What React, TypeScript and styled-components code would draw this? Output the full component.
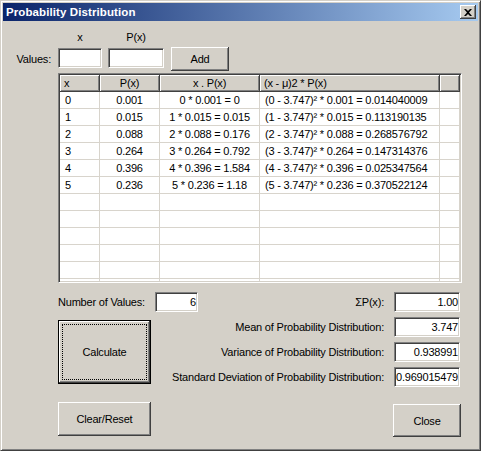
import React from "react";
import styled, { createGlobalStyle } from "styled-components";

const FACE = "#D4D0C8";

const Global = createGlobalStyle`
  html, body { margin: 0; padding: 0; background: ${FACE}; }
  body {
    font-family: "Liberation Sans", Arial, sans-serif;
    font-size: 11px;
    letter-spacing: -0.2px;
    color: #000;
  }
  #root { width: 481px; height: 451px; }
`;

const Window = styled.div`
  box-sizing: border-box;
  width: 481px;
  height: 451px;
  background: ${FACE};
  border: 1px solid;
  border-color: ${FACE} #404040 #404040 ${FACE};
  box-shadow: inset 1px 1px #fff, inset -1px -1px #808080;
  padding: 2px;
  display: flex;
  flex-direction: column;
`;

const TitleBar = styled.div`
  height: 18px;
  flex: none;
  background: linear-gradient(to right, #0a246a, #a6caf0);
  display: flex;
  align-items: center;
  justify-content: space-between;
  padding: 0 2px 0 3px;
`;

const Title = styled.span`
  color: #fff;
  font-weight: bold;
  font-size: 11.5px;
  letter-spacing: 0.1px;
`;

const TitleClose = styled.button`
  box-sizing: border-box;
  width: 16px;
  height: 14px;
  padding: 0;
  border: none;
  background: ${FACE};
  box-shadow: inset -1px -1px #404040, inset 1px 1px #fff, inset -2px -2px #808080,
    inset 2px 2px ${FACE};
  display: flex;
  align-items: center;
  justify-content: center;
`;

const Body = styled.div`
  flex: 1;
  display: flex;
  flex-direction: column;
`;

const EntryGrid = styled.div`
  display: grid;
  grid-template-columns: 55px 44px 6px 56px 7px 58px;
  grid-template-rows: 26px 24px;
`;

const ColLabel = styled.span<{ $col: number }>`
  grid-column: ${(p) => p.$col};
  grid-row: 1;
  align-self: end;
  justify-self: center;
  padding-bottom: 4px;
`;

const RowLabel = styled.span`
  grid-column: 1;
  grid-row: 2;
  align-self: center;
  justify-self: end;
  padding-right: 7px;
`;

const TextBox = styled.div<{ $col?: number }>`
  box-sizing: border-box;
  ${(p) => (p.$col ? `grid-column: ${p.$col}; grid-row: 2; margin-top: 1px;` : "")}
  height: 20px;
  background: #fff;
  border: 1px solid;
  border-color: #808080 #fff #fff #808080;
  box-shadow: inset 1px 1px #404040, inset -1px -1px ${FACE};
  padding: 0 1px;
  line-height: 18px;
  text-align: right;
  white-space: nowrap;
  overflow: hidden;
`;

const Button = styled.button<{ $w: number; $h: number; $default?: boolean }>`
  box-sizing: border-box;
  width: ${(p) => p.$w}px;
  height: ${(p) => p.$h}px;
  padding: 0;
  margin: 0;
  font-family: inherit;
  font-size: 11px;
  letter-spacing: inherit;
  color: #000;
  background: ${FACE};
  position: relative;
  border: ${(p) => (p.$default ? "1px solid #000" : "none")};
  box-shadow: inset -1px -1px #404040, inset 1px 1px #fff, inset -2px -2px #808080,
    inset 2px 2px ${FACE};
  &::after {
    content: "";
    display: ${(p) => (p.$default ? "block" : "none")};
    position: absolute;
    inset: 3px;
    border: 1px dotted #000;
  }
`;

const AddButton = styled(Button)`
  grid-column: 6;
  grid-row: 2;
`;

const TableFrame = styled.div`
  box-sizing: border-box;
  margin: 2px 16px 0 55px;
  height: 210px;
  border: 1px solid;
  border-color: #808080 #fff #fff #808080;
  box-shadow: inset 1px 1px #404040, inset -1px -1px ${FACE};
  padding: 1px;
  background: ${FACE};
`;

const Table = styled.div`
  height: 100%;
  overflow: hidden;
  background: #fff;
  display: grid;
  grid-template-columns: 40px 60px 100px 180px 20px;
  grid-auto-rows: 17px;
`;

const HeadCell = styled.div<{ $center?: boolean }>`
  box-sizing: border-box;
  background: ${FACE};
  border-right: 1px solid #404040;
  border-bottom: 1px solid #404040;
  box-shadow: inset 1px 1px #fff, inset -1px -1px #808080;
  padding: 0 4px;
  line-height: 16px;
  white-space: nowrap;
  overflow: hidden;
  text-align: ${(p) => (p.$center ? "center" : "left")};
`;

const Cell = styled.div<{ $center?: boolean }>`
  box-sizing: border-box;
  border-right: 1px solid #d8d4cc;
  border-bottom: 1px solid #d8d4cc;
  padding: 0 5px;
  line-height: 16px;
  white-space: nowrap;
  overflow: hidden;
  text-align: ${(p) => (p.$center ? "center" : "left")};
`;

const Bottom = styled.div`
  margin-top: 9px;
  padding: 0 18px 0 55px;
  display: flex;
  justify-content: space-between;
`;

const LeftCol = styled.div`
  flex: 0 1 auto;
  min-width: 0;
  display: flex;
  flex-direction: column;
`;

const CountRow = styled.div`
  display: grid;
  grid-template-columns: 97px 43px;
  align-items: center;
  margin-bottom: 8px;
  white-space: nowrap;
`;

const Spacer = styled.div<{ $h: number }>`
  height: ${(p) => p.$h}px;
`;

const RightCol = styled.div`
  flex: none;
  display: flex;
  flex-direction: column;
  align-items: flex-end;
`;

const StatsGrid = styled.div`
  display: grid;
  grid-template-columns: auto 66px;
  grid-auto-rows: 20px;
  row-gap: 5px;
  column-gap: 10px;
  align-items: center;
`;

const StatLabel = styled.span`
  justify-self: end;
  white-space: nowrap;
`;

const CloseSlot = styled.div`
  margin: 17px -1px 0 0;
`;

const rows = [
  ["0", "0.001", "0 * 0.001 = 0", "(0 - 3.747)² * 0.001 = 0.014040009"],
  ["1", "0.015", "1 * 0.015 = 0.015", "(1 - 3.747)² * 0.015 = 0.113190135"],
  ["2", "0.088", "2 * 0.088 = 0.176", "(2 - 3.747)² * 0.088 = 0.268576792"],
  ["3", "0.264", "3 * 0.264 = 0.792", "(3 - 3.747)² * 0.264 = 0.147314376"],
  ["4", "0.396", "4 * 0.396 = 1.584", "(4 - 3.747)² * 0.396 = 0.025347564"],
  ["5", "0.236", "5 * 0.236 = 1.18", "(5 - 3.747)² * 0.236 = 0.370522124"],
];

const stats = [
  ["ΣP(x):", "1.00"],
  ["Mean of Probability Distribution:", "3.747"],
  ["Variance of Probability Distribution:", "0.938991"],
  ["Standard Deviation of Probability Distribution:", "0.969015479"],
];

export default function App() {
  return (
    <>
      <Global />
      <Window>
        <TitleBar>
          <Title>Probability Distribution</Title>
          <TitleClose aria-label="Close">
            <svg width="8" height="7" viewBox="0 0 8 7">
              <path
                d="M0 0h2l2 2 2-2h2L5 3.5 8 7H6L4 5 2 7H0l3-3.5z"
                fill="#000"
              />
            </svg>
          </TitleClose>
        </TitleBar>
        <Body>
          <EntryGrid>
            <ColLabel $col={2}>x</ColLabel>
            <ColLabel $col={4}>P(x)</ColLabel>
            <RowLabel>Values:</RowLabel>
            <TextBox $col={2} />
            <TextBox $col={4} />
            <AddButton $w={58} $h={24}>Add</AddButton>
          </EntryGrid>
          <TableFrame>
            <Table>
              <HeadCell>x</HeadCell>
              <HeadCell $center>P(x)</HeadCell>
              <HeadCell $center>x . P(x)</HeadCell>
              <HeadCell>(x - μ)2 * P(x)</HeadCell>
              <HeadCell />
              {rows.map((r, i) => (
                <React.Fragment key={i}>
                  <Cell>{r[0]}</Cell>
                  <Cell $center>{r[1]}</Cell>
                  <Cell $center>{r[2]}</Cell>
                  <Cell>{r[3]}</Cell>
                  <Cell />
                </React.Fragment>
              ))}
              {Array.from({ length: 7 }).map((_, i) => (
                <React.Fragment key={"e" + i}>
                  <Cell />
                  <Cell />
                  <Cell />
                  <Cell />
                  <Cell />
                </React.Fragment>
              ))}
            </Table>
          </TableFrame>
          <Bottom>
            <LeftCol>
              <CountRow>
                <span>Number of Values:</span>
                <TextBox>6</TextBox>
              </CountRow>
              <Button $w={93} $h={64} $default>
                Calculate
              </Button>
              <Spacer $h={18} />
              <Button $w={93} $h={34}>
                Clear/Reset
              </Button>
            </LeftCol>
            <RightCol>
              <StatsGrid>
                {stats.map(([l, v]) => (
                  <React.Fragment key={l}>
                    <StatLabel>{l}</StatLabel>
                    <TextBox>{v}</TextBox>
                  </React.Fragment>
                ))}
              </StatsGrid>
              <CloseSlot>
                <Button $w={68} $h={33}>
                  Close
                </Button>
              </CloseSlot>
            </RightCol>
          </Bottom>
        </Body>
      </Window>
    </>
  );
}
